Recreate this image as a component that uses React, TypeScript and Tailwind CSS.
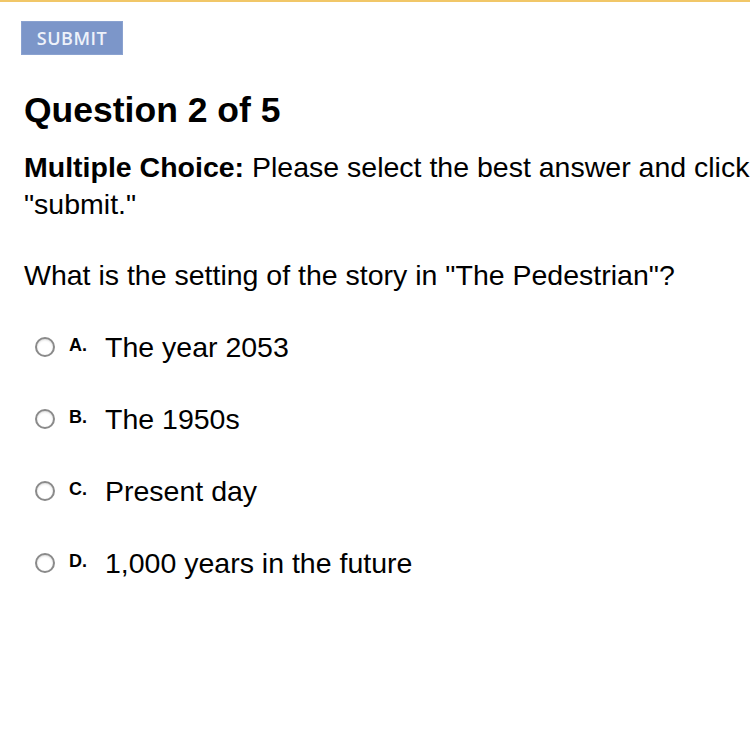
const options = [
  { letter: "A", text: "The year 2053" },
  { letter: "B", text: "The 1950s" },
  { letter: "C", text: "Present day" },
  { letter: "D", text: "1,000 years in the future" },
];

export default function App() {
  return (
    <div className="w-[750px] h-[750px] overflow-hidden bg-white font-['Liberation_Sans',Arial,sans-serif] text-black">
      <div className="h-[2px] bg-[#f1c768]" />
      <div className="pl-[24px] pt-[19px]">
        <button className="ml-[-3px] h-[34px] w-[102px] bg-[#7c96c9] text-[#eef2fa] text-[18px] font-semibold font-['Open_Sans',sans-serif] tracking-[0.5px] border border-[#8aa2d0]">
          SUBMIT
        </button>

        <h1 className="mt-[35px] text-[35.5px] font-bold leading-[40px]">Question 2 of 5</h1>

        <p className="mt-[19px] text-[28.5px] leading-[37px] whitespace-nowrap">
          <span className="font-bold">Multiple Choice:</span> Please select the best answer and click
          <br />
          "submit."
        </p>

        <p className="mt-[34px] text-[28.5px] leading-[37px]">
          What is the setting of the story in "The Pedestrian"?
        </p>

        <div className="mt-[35px] flex flex-col gap-[36px] pl-[11px]">
          {options.map((o) => (
            <label key={o.letter} className="flex items-center h-[36px]">
              <span className="w-[20px] h-[20px] rounded-full border-2 border-[#8a8a8a] bg-white shadow-[inset_0_1px_2px_rgba(0,0,0,0.15)]" />
              <span className="ml-[14px] w-[36px] text-[18px] font-bold self-start mt-[3px]">{o.letter}.</span>
              <span className="text-[28.5px] leading-[36px]">{o.text}</span>
            </label>
          ))}
        </div>
      </div>
    </div>
  );
}
